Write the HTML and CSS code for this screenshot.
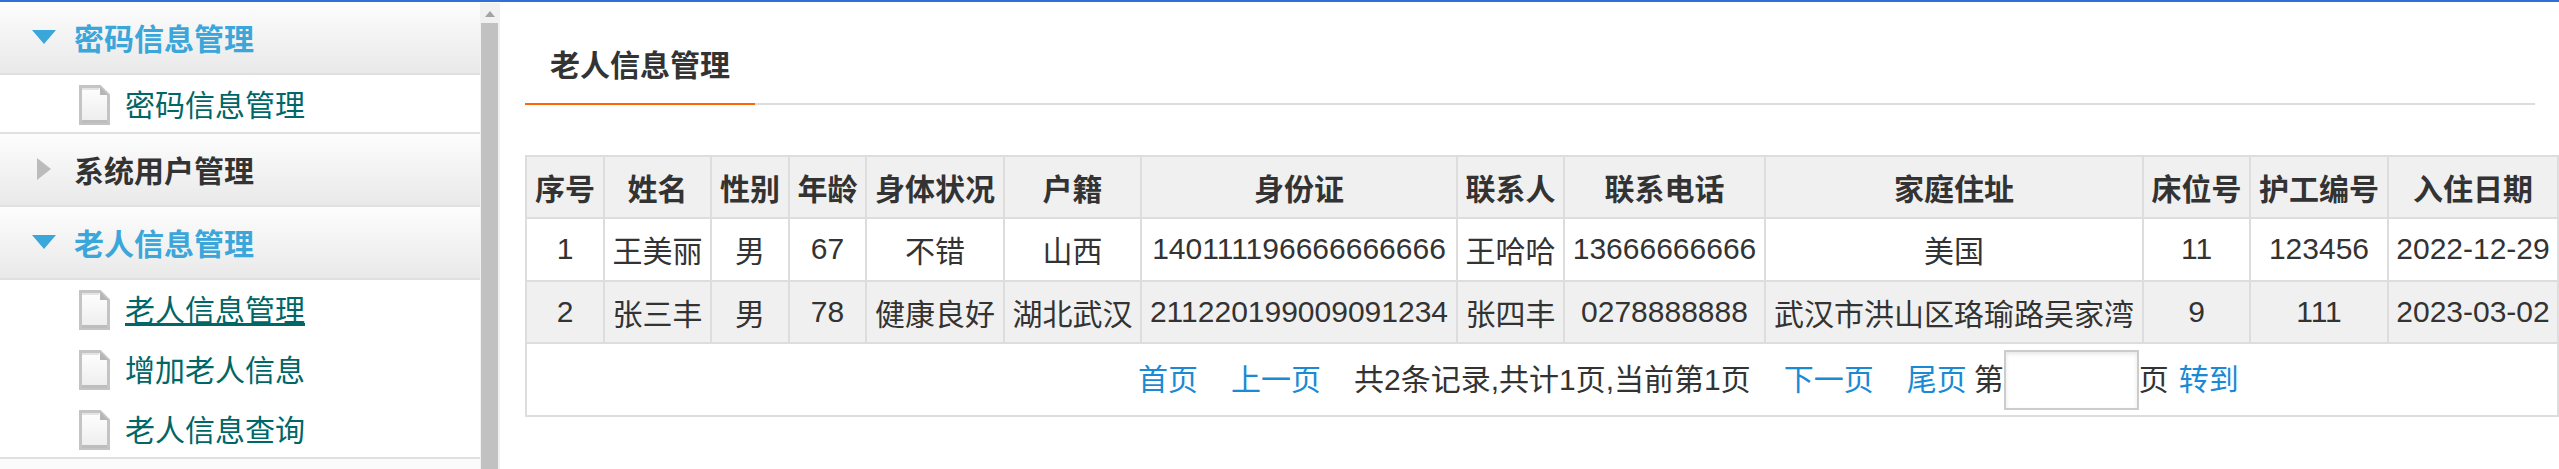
FILE: index.html
```html
<!DOCTYPE html>
<html lang="zh-CN">
<head>
  <meta charset="UTF-8">
  <title>老人信息管理</title>
  <link rel="stylesheet" href="styles.css">
</head>
<body>
  <div class="topbar"></div>
  <div class="wrap">
    <div class="sidebar">
      <div class="menu">
        <div class="menu-title open">
          <span class="arrow"><svg width="24" height="14" viewBox="0 0 24 14"><path d="M0 0H24L12 14Z" fill="#3ba6d9"/></svg></span>
          密码信息管理
        </div>
        <ul class="menu-list">
          <li>
            <svg class="doc" width="31" height="40" viewBox="0 0 31 40"><use href="#doc-icon"/></svg>
            <a href="#">密码信息管理</a>
          </li>
        </ul>

        <div class="menu-title">
          <span class="arrow"><svg width="14" height="22" viewBox="0 0 14 22"><path d="M0 0L14 11L0 22Z" fill="#bbb"/></svg></span>
          系统用户管理
        </div>

        <div class="menu-title open">
          <span class="arrow"><svg width="24" height="14" viewBox="0 0 24 14"><path d="M0 0H24L12 14Z" fill="#3ba6d9"/></svg></span>
          老人信息管理
        </div>
        <ul class="menu-list">
          <li>
            <svg class="doc" width="31" height="40" viewBox="0 0 31 40"><use href="#doc-icon"/></svg>
            <a href="#" class="current">老人信息管理</a>
          </li>
          <li>
            <svg class="doc" width="31" height="40" viewBox="0 0 31 40"><use href="#doc-icon"/></svg>
            <a href="#">增加老人信息</a>
          </li>
          <li>
            <svg class="doc" width="31" height="40" viewBox="0 0 31 40"><use href="#doc-icon"/></svg>
            <a href="#">老人信息查询</a>
          </li>
        </ul>
        <div class="menu-title menu-rest"></div>
      </div>

      <div class="scrollbar">
        <svg class="scroll-up" width="10" height="6" viewBox="0 0 10 6"><path d="M5 0L10 6H0Z" fill="#a3a3a3"/></svg>
        <div class="thumb"></div>
      </div>
    </div>

    <div class="main">
      <div class="tabbar">
        <div class="tab">老人信息管理</div>
      </div>

      <table class="list">
        <colgroup>
          <col class="w78"><col class="w107"><col class="w78"><col class="w77"><col class="w138"><col class="w137">
          <col class="w316"><col class="w107"><col class="w201"><col class="w378"><col class="w107"><col class="w138"><col class="w170">
        </colgroup>
        <tr class="head">
          <th>序号</th><th>姓名</th><th>性别</th><th>年龄</th><th>身体状况</th><th>户籍</th>
          <th>身份证</th><th>联系人</th><th>联系电话</th><th>家庭住址</th><th>床位号</th><th>护工编号</th><th>入住日期</th>
        </tr>
        <tr class="row">
          <td>1</td><td>王美丽</td><td>男</td><td>67</td><td>不错</td><td>山西</td>
          <td>140111196666666666</td><td>王哈哈</td><td>13666666666</td><td>美国</td><td>11</td><td>123456</td><td>2022-12-29</td>
        </tr>
        <tr class="row even">
          <td>2</td><td>张三丰</td><td>男</td><td>78</td><td>健康良好</td><td>湖北武汉</td>
          <td>211220199009091234</td><td>张四丰</td><td>0278888888</td><td>武汉市洪山区珞瑜路吴家湾</td><td>9</td><td>111</td><td>2023-03-02</td>
        </tr>
        <tr class="foot">
          <td colspan="13">
            <div class="pager">
              <a href="#" class="far">首页</a>
              <a href="#" class="far">上一页</a>
              <span class="far">共2条记录,共计1页,当前第1页</span>
              <a href="#" class="far">下一页</a>
              <a href="#" class="near">尾页</a>
              <span>第</span>
              <input type="text" class="page-input">
              <span class="after-input">页</span>
              <a href="#">转到</a>
            </div>
          </td>
        </tr>
      </table>
    </div>
  </div>

  <!-- 文件图标 -->
  <svg class="defs" width="0" height="0">
    <defs>
      <linearGradient id="doc-fill" x1="0" y1="0" x2="0" y2="1">
        <stop offset="0" stop-color="#ffffff"/>
        <stop offset="1" stop-color="#ececec"/>
      </linearGradient>
      <g id="doc-icon">
        <path d="M1.5 1.5H21L29.5 10V38.5H1.5Z" fill="url(#doc-fill)" stroke="#c4c4c4" stroke-width="3"/>
        <path d="M3 3H20V5H3Z" fill="#e4e4e4"/>
        <path d="M21 2V10H29Z" fill="#b5b5b5"/>
        <path d="M3 35H28V38H3Z" fill="#bdbdbd"/>
      </g>
    </defs>
  </svg>
</body>
</html>
```

FILE: styles.css
```css
html, body {
  height: 469px;
  margin: 0;
  padding: 0;
  overflow: hidden;
}

body {
  font-family: "Liberation Sans", "Noto Sans CJK SC", sans-serif;
  font-size: 30px;
  color: #333;
  background-color: #fff;
}

.topbar {
  height: 2px;
  background-color: #2f6fd6;
}

.wrap {
  display: flex;
  height: 467px;
  overflow: hidden;
}

.defs {
  display: block;
}

/* 左侧菜单 */
.sidebar {
  display: flex;
  flex: none;
  width: 500px;
  height: 467px;
}

.menu {
  width: 480px;
  flex: none;
}

.menu-title {
  display: flex;
  align-items: center;
  box-sizing: border-box;
  height: 73px;
  padding-bottom: 2px;
  font-weight: bold;
  color: #333;
  background: linear-gradient(#fdfdfd, #e9e9e9);
  border-bottom: 2px solid #e0e0e0;
}

.menu-title.open {
  color: #3ba6d9;
}

.menu-rest {
  height: 10px;
  border-bottom: none;
  background: #fbfbfb;
}

.arrow {
  display: flex;
  justify-content: center;
  width: 24px;
  margin: 0 18px 0 32px;
}

.menu-list {
  list-style: none;
  margin: 0;
  padding: 10px 0 7px;
  display: flex;
  flex-direction: column;
  gap: 20px;
  border-bottom: 2px solid #e0e0e0;
}

.menu-list li {
  display: flex;
  align-items: center;
  gap: 15px;
  height: 40px;
  padding-left: 79px;
}

.menu-list a {
  padding-bottom: 4px;
  color: #006666;
  text-decoration: none;
}

.menu-list a.current {
  text-decoration: underline;
  text-decoration-thickness: 3px;
}

.scrollbar {
  display: flex;
  flex-direction: column;
  width: 20px;
  margin-top: 1px;
  background-color: #f1f1f1;
}

.scroll-up {
  display: block;
  margin: 8px 0 0 5px;
}

.thumb {
  flex: 1;
  width: 17px;
  margin: 6px 0 0 1px;
  background-color: #c1c1c1;
}

/* 右侧内容 */
.main {
  flex: 1;
  padding-left: 25px;
  min-width: 0;
}

.tabbar {
  width: 2010px;
  margin-top: 38px;
  border-bottom: 2px solid #ddd;
}

.tab {
  box-sizing: border-box;
  width: 230px;
  margin-bottom: -2px;
  padding: 0 25px 11px;
  line-height: 52px;
  font-weight: bold;
  color: #333;
  border-bottom: 2px solid #f60;
}

.list {
  width: 2034px;
  margin-top: 50px;
  table-layout: fixed;
  border-collapse: collapse;
}

.list th,
.list td {
  padding: 0;
  border: 2px solid #ddd;
  text-align: center;
  white-space: nowrap;
}

.head {
  height: 62px;
  background-color: #f0f0f0;
}

.row {
  height: 62.5px;
}

.row.even {
  background-color: #f0f0f0;
}

.foot {
  height: 73px;
}

.w77 { width: 77px; }
.w78 { width: 78px; }
.w107 { width: 107px; }
.w137 { width: 137px; }
.w138 { width: 138px; }
.w170 { width: 170px; }
.w201 { width: 201px; }
.w316 { width: 316px; }
.w378 { width: 378px; }

.pager {
  display: flex;
  align-items: center;
  padding-left: 611px;
}

.pager a,
.pager span {
  padding-bottom: 6px;
}

.pager a {
  color: #1a8ad4;
  text-decoration: none;
}

.pager .far {
  margin-right: 33px;
}

.pager .near {
  margin-right: 7px;
}

.pager .after-input {
  margin-right: 10px;
}

.page-input {
  box-sizing: border-box;
  width: 135px;
  height: 60px;
  margin: 0;
  padding: 0;
  border: 2px solid #ccc;
  box-shadow: inset 0 2px 4px rgba(0, 0, 0, 0.1);
  background-color: #fff;
}
```
